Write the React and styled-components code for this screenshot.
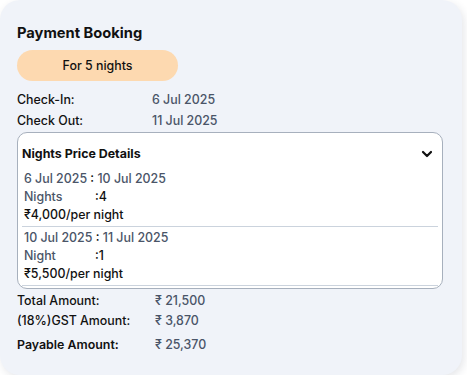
import React from 'react'
import styled, { createGlobalStyle } from 'styled-components'

const GlobalStyle = createGlobalStyle`
  body {
    margin: 0;
    background: #ffffff;
    font-family: Inter, "Liberation Sans", sans-serif;
  }
`

const Card = styled.div`
  width: 462px;
  height: 375px;
  box-sizing: border-box;
  padding: 23px 17px 0 17px;
  background: #f0f3f9;
  border-radius: 20px;
  box-shadow: 2px 3px 8px rgba(40, 50, 70, 0.12);
`

const Title = styled.h2`
  margin: 0;
  font-size: 14.7px;
  font-weight: 700;
  color: #111111;
  line-height: 20px;
`

const Pill = styled.div`
  margin-top: 7px;
  width: 161px;
  height: 31px;
  display: flex;
  align-items: center;
  justify-content: center;
  background: #fdd9b0;
  border-radius: 16px;
  font-size: 12.4px;
  font-weight: 500;
  color: #111111;
`

const InfoList = styled.div`
  margin-top: ${(p) => p.$top || 8}px;
  display: flex;
  flex-direction: column;
`

const InfoRow = styled.div`
  display: grid;
  grid-template-columns: ${(p) => p.$labelWidth || 135}px 1fr;
  font-size: 12.4px;
  line-height: ${(p) => p.$lh || 21}px;
  margin-top: ${(p) => p.$gap || 0}px;
`

const Label = styled.span`
  color: #111111;
  font-weight: ${(p) => (p.$strong ? 600 : 500)};
`

const Value = styled.span`
  color: #4a5568;
  font-weight: 500;
`

const DetailsBox = styled.div`
  margin-top: 1px;
  width: 426px;
  height: 157px;
  box-sizing: border-box;
  border: 1px solid #a7b0bd;
  border-radius: 10px;
  background: #ffffff;
  overflow: hidden;
  padding: 0 4px;
`

const BoxHeader = styled.div`
  display: flex;
  align-items: center;
  justify-content: space-between;
  padding: 12px 5px 5px 0;
  line-height: 18px;
  font-size: 12.4px;
  font-weight: 700;
  color: #111111;
`

const Period = styled.div`
  padding: 2px;
  border-bottom: 1px solid #cbd3dd;
  font-size: 12.4px;
  line-height: 18px;
`

const Dates = styled.div`
  color: #4a5568;
  font-weight: 500;

  b {
    color: #111111;
    font-weight: 500;
  }
`

const NightsRow = styled.div`
  display: grid;
  grid-template-columns: 71px 1fr;
  color: #4a5568;
  font-weight: 500;

  span:last-child {
    color: #111111;
  }
`

const Price = styled.div`
  color: #111111;
  font-weight: 500;
`

const Chevron = () => (
  <svg width="12" height="10" viewBox="0 0 24 20" fill="none" stroke="#111" strokeWidth="4.5" strokeLinecap="round" strokeLinejoin="round">
    <path d="M4 6l8 8 8-8" />
  </svg>
)

const periods = [
  { from: '6 Jul 2025', to: '10 Jul 2025', label: 'Nights', count: 4, price: '₹4,000/per night' },
  { from: '10 Jul 2025', to: '11 Jul 2025', label: 'Night', count: 1, price: '₹5,500/per night' },
]

const App = () => {
  return (
    <>
      <GlobalStyle />
      <Card>
        <Title>Payment Booking</Title>
        <Pill>For 5 nights</Pill>
        <InfoList>
          <InfoRow>
            <Label>Check-In:</Label>
            <Value>6 Jul 2025</Value>
          </InfoRow>
          <InfoRow>
            <Label>Check Out:</Label>
            <Value>11 Jul 2025</Value>
          </InfoRow>
        </InfoList>
        <DetailsBox>
          <BoxHeader>
            Nights Price Details
            <Chevron />
          </BoxHeader>
          {periods.map((p) => (
            <Period key={p.from}>
              <Dates>
                {p.from} <b>:</b> {p.to}
              </Dates>
              <NightsRow>
                <span>{p.label}</span>
                <span>:{p.count}</span>
              </NightsRow>
              <Price>{p.price}</Price>
            </Period>
          ))}
        </DetailsBox>
        <InfoList $top={2}>
          <InfoRow $labelWidth={138} $lh={20}>
            <Label>Total Amount:</Label>
            <Value>₹ 21,500</Value>
          </InfoRow>
          <InfoRow $labelWidth={138} $lh={20}>
            <Label>(18%)GST Amount:</Label>
            <Value>₹ 3,870</Value>
          </InfoRow>
          <InfoRow $labelWidth={138} $lh={20} $gap={4}>
            <Label $strong>Payable Amount:</Label>
            <Value>₹ 25,370</Value>
          </InfoRow>
        </InfoList>
      </Card>
    </>
  )
}

export default App
